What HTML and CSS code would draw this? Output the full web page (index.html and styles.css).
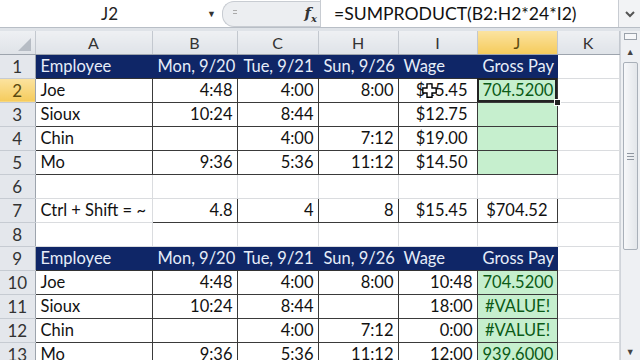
FILE: index.html
```html
<!DOCTYPE html>
<html>
<head>
    <title>SUMPRODUCT Gross Pay</title>
    <link rel="stylesheet" href="styles.css">
</head>
<body>
    <div id="excel">
        <div class="formula-bar">
            <div class="name-box">
                <span class="name">J2</span>
                <span class="drop">&#9660;</span>
            </div>
            <div class="fx-area">
                <span class="grip"></span>
                <span class="fx">f<sub>x</sub></span>
            </div>
            <div class="formula">=SUMPRODUCT(B2:H2*24*I2)</div>
            <div class="expand">
                <svg width="12" height="8" viewBox="0 0 12 8"><path d="M2 2 L6 6 L10 2" fill="none" stroke="#555" stroke-width="2"/></svg>
            </div>
        </div>

        <div class="sheet">
            <table class="grid">
                <colgroup>
                    <col class="w-rh"><col class="w-a"><col class="w-b"><col class="w-c">
                    <col class="w-h"><col class="w-i"><col class="w-j"><col class="w-k">
                </colgroup>
                <tr class="col-heads">
                    <th class="corner"><span class="tri"></span></th>
                    <th>A</th><th>B</th><th>C</th><th>H</th><th>I</th><th class="active">J</th><th>K</th>
                </tr>
                <tr>
                    <th class="rh">1</th>
                    <td class="head">Employee</td>
                    <td class="head num">Mon, 9/20</td>
                    <td class="head num">Tue, 9/21</td>
                    <td class="head num">Sun, 9/26</td>
                    <td class="head">Wage</td>
                    <td class="head">Gross Pay</td>
                    <td></td>
                </tr>
                <tr>
                    <th class="rh active">2</th>
                    <td class="box">Joe</td>
                    <td class="box num">4:48</td>
                    <td class="box num">4:00</td>
                    <td class="box num">8:00</td>
                    <td class="box num cur cursor-cell">$15.45
                        <svg class="cursor" width="15" height="15" viewBox="0 0 18 18"><path d="M6 1 H12 V6 H17 V12 H12 V17 H6 V12 H1 V6 H6 Z" fill="#fff" stroke="#000" stroke-width="1.7"/></svg>
                    </td>
                    <td class="box good num selected">704.5200<span class="handle"></span></td>
                    <td></td>
                </tr>
                <tr>
                    <th class="rh">3</th>
                    <td class="box">Sioux</td>
                    <td class="box num">10:24</td>
                    <td class="box num">8:44</td>
                    <td class="box num"></td>
                    <td class="box num cur">$12.75</td>
                    <td class="box good"></td>
                    <td></td>
                </tr>
                <tr>
                    <th class="rh">4</th>
                    <td class="box">Chin</td>
                    <td class="box num"></td>
                    <td class="box num">4:00</td>
                    <td class="box num">7:12</td>
                    <td class="box num cur">$19.00</td>
                    <td class="box good"></td>
                    <td></td>
                </tr>
                <tr>
                    <th class="rh">5</th>
                    <td class="box">Mo</td>
                    <td class="box num">9:36</td>
                    <td class="box num">5:36</td>
                    <td class="box num">11:12</td>
                    <td class="box num cur">$14.50</td>
                    <td class="box good"></td>
                    <td></td>
                </tr>
                <tr>
                    <th class="rh">6</th>
                    <td></td><td></td><td></td><td></td><td></td><td></td><td></td>
                </tr>
                <tr>
                    <th class="rh">7</th>
                    <td>Ctrl + Shift = ~</td>
                    <td class="box num">4.8</td>
                    <td class="box num">4</td>
                    <td class="box num">8</td>
                    <td class="box num cur">$15.45</td>
                    <td class="box num cur">$704.52</td>
                    <td></td>
                </tr>
                <tr>
                    <th class="rh">8</th>
                    <td></td><td></td><td></td><td></td><td></td><td></td><td></td>
                </tr>
                <tr>
                    <th class="rh">9</th>
                    <td class="head">Employee</td>
                    <td class="head num">Mon, 9/20</td>
                    <td class="head num">Tue, 9/21</td>
                    <td class="head num">Sun, 9/26</td>
                    <td class="head">Wage</td>
                    <td class="head">Gross Pay</td>
                    <td></td>
                </tr>
                <tr>
                    <th class="rh">10</th>
                    <td class="box">Joe</td>
                    <td class="box num">4:48</td>
                    <td class="box num">4:00</td>
                    <td class="box num">8:00</td>
                    <td class="box num">10:48</td>
                    <td class="box good num">704.5200</td>
                    <td></td>
                </tr>
                <tr>
                    <th class="rh">11</th>
                    <td class="box">Sioux</td>
                    <td class="box num">10:24</td>
                    <td class="box num">8:44</td>
                    <td class="box num"></td>
                    <td class="box num">18:00</td>
                    <td class="box good err">#VALUE!</td>
                    <td></td>
                </tr>
                <tr>
                    <th class="rh">12</th>
                    <td class="box">Chin</td>
                    <td class="box num"></td>
                    <td class="box num">4:00</td>
                    <td class="box num">7:12</td>
                    <td class="box num">0:00</td>
                    <td class="box good err">#VALUE!</td>
                    <td></td>
                </tr>
                <tr>
                    <th class="rh">13</th>
                    <td class="box">Mo</td>
                    <td class="box num">9:36</td>
                    <td class="box num">5:36</td>
                    <td class="box num">11:12</td>
                    <td class="box num">12:00</td>
                    <td class="box good num">939.6000</td>
                    <td></td>
                </tr>
            </table>

            <div class="scrollbar">
                <div class="split"></div>
                <div class="arrow up">&#9650;</div>
                <div class="track">
                    <div class="thumb"><span class="lines"></span></div>
                </div>
                <div class="arrow down">&#9660;</div>
            </div>
        </div>
    </div>
</body>
</html>
```

FILE: styles.css
```css
body {
    margin: 0;
    background-color: #fff;
    font-family: Lato, "Open Sans", sans-serif;
    overflow: hidden;
}

#excel {
    width: 640px;
    height: 360px;
    display: flex;
    flex-direction: column;
    background-color: #dfe3e8;
}

/* formula bar */
.formula-bar {
    height: 27px;
    display: flex;
    background-color: #fff;
    border-bottom: 1px solid #b8bec6;
}

.name-box {
    width: 222px;
    display: flex;
    align-items: center;
}

.name {
    flex: 1;
    text-align: center;
    font-size: 17px;
    color: #222;
    padding-left: 12px;
}

.drop {
    font-size: 9px;
    color: #333;
    margin-right: 6px;
}

.fx-area {
    width: 98px;
    display: flex;
    align-items: center;
    justify-content: space-between;
    background-color: #eceef1;
    border: 1px solid #c8ccd2;
    border-radius: 12px 0 0 12px;
    border-right: none;
    margin-top: 1px;
    padding: 0 2px 0 10px;
    box-sizing: border-box;
}

.grip {
    width: 4px;
    height: 2px;
    border-top: 1px solid #aaa;
    border-bottom: 1px solid #aaa;
    margin-bottom: 4px;
}

.fx {
    font-family: "DejaVu Serif", serif;
    font-style: italic;
    font-weight: bold;
    font-size: 15px;
    color: #333;
    padding-right: 1px;
}

.fx sub {
    font-size: 10px;
}

.formula {
    flex: 1;
    display: flex;
    align-items: center;
    padding-left: 13px;
    font-size: 17.6px;
    color: #111;
    border-left: 1px solid #c8ccd2;
}

.expand {
    width: 21px;
    display: flex;
    align-items: center;
    justify-content: center;
    border-left: 1px solid #c8ccd2;
    background-color: #f2f3f5;
}

/* sheet */
.sheet {
    margin-top: 3px;
    flex: 1;
    display: flex;
    overflow: hidden;
}

.grid {
    border-collapse: collapse;
    table-layout: fixed;
    width: 619px;
    background-color: #fff;
    font-size: 16.5px;
    color: #111;
}

.w-rh { width: 35px; }
.w-a { width: 117px; }
.w-b { width: 85px; }
.w-c { width: 81px; }
.w-h { width: 80px; }
.w-i { width: 79px; }
.w-j { width: 80px; }
.w-k { width: 62px; }

.grid tr {
    height: 24px;
}

.grid tr.col-heads {
    height: 23px;
}

.col-heads th {
    font-weight: normal;
    font-size: 16px;
    color: #333;
    background: linear-gradient(#eef0f3, #dfe3e8);
    border-right: 1px solid #c3c8cf;
    border-bottom: 1px solid #9da4ad;
    padding: 0;
}

.col-heads th.active {
    background: linear-gradient(#fbe3a0, #f5cb5c);
    color: #5a4a10;
}

.corner {
    position: relative;
}

.tri {
    position: absolute;
    right: 4px;
    bottom: 3px;
    width: 0;
    height: 0;
    border-left: 13px solid transparent;
    border-bottom: 13px solid #b6bcc4;
}

.rh {
    font-weight: normal;
    font-size: 17px;
    color: #333;
    background: #e4e7ec;
    border-right: 1px solid #9da4ad;
    border-bottom: 1px solid #c6cbd2;
    padding: 0;
    text-align: center;
}

.rh.active {
    background: linear-gradient(#fbe3a0, #f5cb5c);
    color: #5a4a10;
}

.grid td {
    border: 1px solid #dadcdf;
    padding: 0 4px 0 5px;
    white-space: nowrap;
    overflow: visible;
}

.grid td.num {
    text-align: right;
}

.grid td.cur {
    padding-right: 9px;
}

.grid td.head {
    background-color: #0f2667;
    color: #e6edf9;
    border-color: #0f2667;
    border-bottom: 1px solid #333;
}

.grid td.box {
    border: 1px solid #3a3a3a;
}

.grid td.good {
    background-color: #c6efce;
    color: #0b5a16;
}

.grid td.err {
    text-align: center;
}

.grid td.selected {
    position: relative;
    outline: 2px solid #222;
    outline-offset: -2px;
}

.handle {
    position: absolute;
    right: -4px;
    bottom: -4px;
    width: 5px;
    height: 5px;
    background-color: #222;
    border: 1px solid #fff;
}

.cursor-cell {
    position: relative;
}

.cursor {
    position: absolute;
    left: 23px;
    top: 4px;
}

/* vertical scrollbar */
.scrollbar {
    width: 21px;
    display: flex;
    flex-direction: column;
    background-color: #eef0f3;
    border-left: 1px solid #d0d4da;
}

.split {
    height: 5px;
    margin: 2px 3px 4px;
    border: 1px solid #9aa1aa;
    background-color: #f6f7f9;
}

.arrow {
    height: 16px;
    font-size: 9px;
    color: #444;
    text-align: center;
    line-height: 16px;
}

.track {
    flex: 1;
    padding: 2px 2px;
}

.thumb {
    height: 186px;
    border: 1px solid #a9b0b9;
    border-radius: 2px;
    background: linear-gradient(to right, #f7f8fa, #e3e6ea);
    display: flex;
    align-items: center;
    justify-content: center;
}

.lines {
    width: 7px;
    height: 5px;
    border-top: 1px solid #8f96a0;
    border-bottom: 1px solid #8f96a0;
    position: relative;
}

.lines::after {
    content: '';
    position: absolute;
    left: 0;
    top: 2px;
    width: 7px;
    border-top: 1px solid #8f96a0;
}
```
